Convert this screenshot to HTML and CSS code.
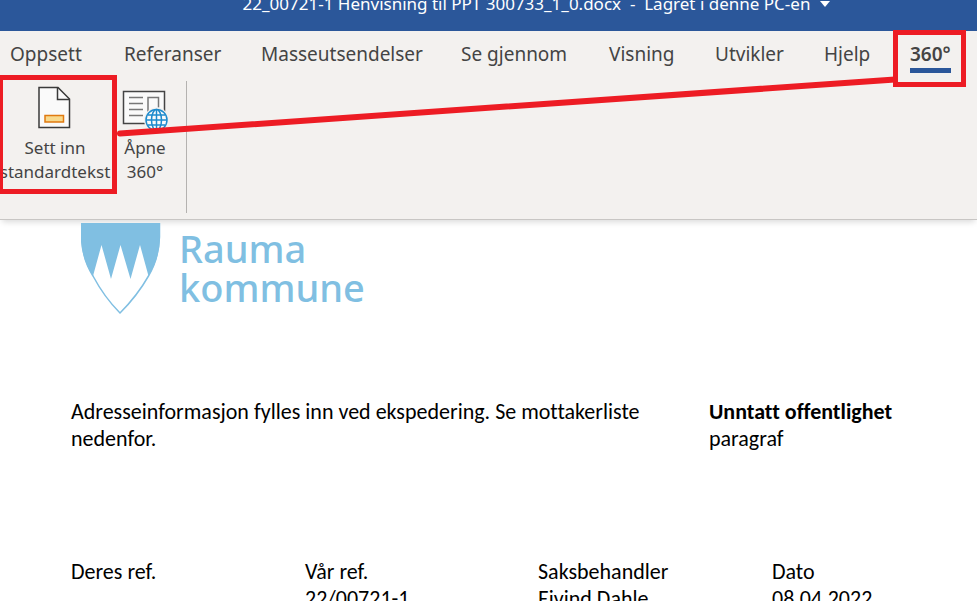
FILE: index.html
```html
<!DOCTYPE html>
<html lang="nb">
<head>
<meta charset="utf-8">
<title>22_00721-1 Henvisning til PPT</title>
<link rel="stylesheet" href="styles.css">
</head>
<body>
<div class="window">
  <header class="titlebar">
    <button class="doc-title" type="button">22_00721-1 Henvisning til PPT 300733_1_0.docx&nbsp; -&nbsp; Lagret i denne PC-en
      <svg class="caret" viewBox="0 0 10 6" aria-hidden="true"><path d="M0 0h10L5 6z"/></svg>
    </button>
  </header>
  <nav class="tabs">
    <a href="#">Oppsett</a>
    <a href="#">Referanser</a>
    <a href="#">Masseutsendelser</a>
    <a href="#">Se gjennom</a>
    <a href="#">Visning</a>
    <a href="#">Utvikler</a>
    <a href="#">Hjelp</a>
    <a href="#" class="active">360°</a>
  </nav>
  <section class="ribbon">
    <div class="group">
      <button class="tool tool-insert" type="button">
        <svg viewBox="0 0 44 44" aria-hidden="true">
          <path d="M6 1.500h19L36.500 13v28.500H6z" fill="#fafafa" stroke="#3a3a3a" stroke-width="1.500"/>
          <path d="M24.500 1.500V13.500H36.500" fill="none" stroke="#3a3a3a" stroke-width="1.500"/>
          <path d="M12 29.500h18.500v6.500H12z" fill="#f8d98c" stroke="#e07a10" stroke-width="1.500"/>
        </svg>
        <span>Sett inn<br>standardtekst</span>
      </button>
      <button class="tool tool-open" type="button">
        <svg viewBox="0 0 48 44" aria-hidden="true">
          <path d="M2.500 5.500h41v32h-41z" fill="#fafafa" stroke="#444" stroke-width="1.500"/>
          <path d="M8 11.500h14M8 17.500h14M8 23.500h14M8 29.500h14M27 26V11.500h10.500v10" fill="none" stroke="#777" stroke-width="1.500"/>
          <circle cx="35.500" cy="34" r="12.500" fill="#f3f1ef"/>
          <g fill="#fafafa" stroke="#1e8bcd" stroke-width="1.500">
            <circle cx="35.500" cy="34" r="10.500"/>
            <ellipse cx="35.500" cy="34" rx="5" ry="10.500"/>
            <path d="M35.500 23.500v21M25 34h21M27 29h17M27 39h17" fill="none"/>
          </g>
        </svg>
        <span>Åpne<br>360°</span>
      </button>
    </div>
  </section>
  <svg class="callout" viewBox="0 0 977 220" aria-hidden="true">
    <path d="M120 133.500L895 79.500" stroke-width="6" stroke-linecap="round"/>
    <rect x="0.500" y="77.500" width="114" height="114"/>
    <rect x="895.500" y="32.500" width="68" height="52"/>
  </svg>
  <main class="page">
    <div class="brand">
      <svg class="shield" viewBox="0 0 80 92" aria-hidden="true">
        <path d="M.5 0H78.500V14C78 30 74 42 67.500 53C59 68 49 80 39 90C29 80 20 68 12 53C5 42 1 30 .5 14z" fill="#fff" stroke="#80bfe2" stroke-width="1.500"/>
        <path d="M0 0H79V14C78.500 30 74.500 42 67.500 53L59 22L49.500 56L39.500 22L30 56L20.500 22L12 53C4.500 42 .5 30 0 14z" fill="#80bfe2"/>
      </svg>
      <div class="brand-name">Rauma<br>kommune</div>
    </div>
    <div class="address">
      <p>Adresseinformasjon fylles inn ved ekspedering. Se mottakerliste nedenfor.</p>
      <p><strong>Unntatt offentlighet</strong><br>paragraf</p>
    </div>
    <dl class="refs">
      <div><dt>Deres ref.</dt></div>
      <div><dt>Vår ref.</dt><dd>22/00721-1</dd></div>
      <div><dt>Saksbehandler</dt><dd>Eivind Dahle</dd></div>
      <div><dt>Dato</dt><dd>08.04.2022</dd></div>
    </dl>
  </main>
</div>
</body>
</html>
```
FILE: styles.css
```css
* {
  box-sizing: border-box;
}

body {
  margin: 0;
  background: #fff;
}

.window {
  position: relative;
  height: 100vh;
  overflow: hidden;
  font-family: "Noto Sans", "Open Sans", sans-serif;
  color: #444;
}

button {
  padding: 0;
  border: 0;
  background: none;
  color: inherit;
  font: inherit;
}

.titlebar {
  display: flex;
  align-items: flex-start;
  justify-content: center;
  height: 31px;
  padding-left: 96px;
  overflow: hidden;
  background: #2b579a;
  color: #fff;
}

.doc-title {
  display: flex;
  align-items: center;
  gap: 10px;
  margin-top: -8px;
  font-size: 17px;
  line-height: 24px;
  white-space: nowrap;
}

.caret {
  width: 10px;
  height: 6px;
  fill: #fff;
}

.tabs {
  display: grid;
  grid-template-columns: 114fr 137fr 200fr 148fr 106fr 109fr 86fr 67fr;
  height: 46px;
  padding: 10px 0 0 10px;
  background: #f3f1ef;
  font-size: 19px;
  line-height: 26px;
}

.tabs a {
  justify-self: start;
  color: #444;
  text-decoration: none;
  white-space: nowrap;
}

.tabs .active {
  height: 32px;
  border-bottom: 5px solid #2b579a;
  font-weight: 600;
}

.ribbon {
  height: 143px;
  padding-top: 4px;
  border-bottom: 1px solid #c8c6c4;
  background: #f3f1ef;
  box-shadow: 0 4px 6px -2px rgba(0, 0, 0, 0.15);
}

.group {
  display: flex;
  align-items: flex-start;
  width: 187px;
  height: 132px;
  padding-top: 5px;
  border-right: 1px solid #b4b2b0;
}

.tool {
  display: flex;
  flex-direction: column;
  align-items: center;
  gap: 6px;
  font-size: 17px;
  line-height: 24px;
}

.tool svg {
  height: 44px;
}

.tool-insert {
  width: 110px;
}

.tool-open {
  width: 70px;
}

.callout {
  position: absolute;
  top: 0;
  left: 0;
  width: 100%;
  fill: none;
  stroke: #ed1c24;
  stroke-width: 5;
  pointer-events: none;
}

.page {
  padding: 3px 0 0 71px;
  color: #000;
  font-family: Carlito, Calibri, Lato, sans-serif;
  font-size: 22px;
  font-variant-ligatures: none;
  line-height: 27px;
}

.brand {
  display: flex;
  gap: 18px;
  padding-left: 10px;
}

.shield {
  width: 80px;
  height: 92px;
}

.brand-name {
  padding-top: 6px;
  color: #80bfe2;
  font-family: "Noto Sans", sans-serif;
  font-size: 38px;
  font-weight: 500;
  line-height: 39px;
}

.address {
  display: grid;
  grid-template-columns: 638fr 268fr;
  margin-top: 83px;
}

.address p {
  margin: 0;
}

.address p:first-child {
  padding-right: 60px;
}

.refs {
  display: grid;
  grid-template-columns: 234fr 233fr 234fr 205fr;
  margin: 106px 0 0;
}

.refs dd {
  margin: 0;
}
```
